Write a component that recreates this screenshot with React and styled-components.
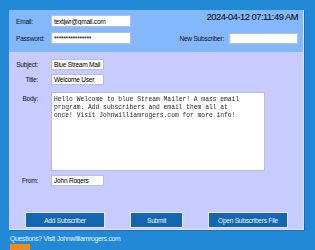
import React from 'react';
import styled, { createGlobalStyle } from 'styled-components';

const GlobalStyle = createGlobalStyle`
  html, body {
    margin: 0;
    padding: 0;
    background: #2189d6;
  }
`;

const font = `"Liberation Sans", Arial, sans-serif`;

const Window = styled.div`
  width: 315px;
  height: 250px;
  overflow: hidden;
  box-sizing: border-box;
  padding: 10px 0 0 9px;
  background: #2189d6;
  font-family: ${font};
  display: flex;
  flex-direction: column;
`;

const Panel = styled.div`
  width: 294px;
  height: 221px;
  display: flex;
  flex-direction: column;
  border-right: 1px solid #e4e6ff;
  border-bottom: 1px solid #e4e6ff;
  box-shadow: 1px 1px 0 #1a6cbc;
`;

const TopSection = styled.div`
  height: 42px;
  box-sizing: border-box;
  background: #84b8fc;
  padding: 5px 5px 0 7px;
  display: grid;
  grid-template-columns: 35px 80px 1fr auto 69px;
  grid-template-rows: 12px 12px;
  row-gap: 5px;
  align-items: center;
`;

const Label = styled.label`
  font-size: 6.6px;
  letter-spacing: -0.25px;
  color: #111;
  white-space: nowrap;
  text-align: ${p => (p.$right ? 'right' : 'left')};
  padding-right: ${p => (p.$right ? '5px' : '0')};
`;

const Field = styled.input`
  box-sizing: border-box;
  width: ${p => p.$w || 80}px;
  height: ${p => p.$h || 12}px;
  margin: 0;
  padding: 0 0 0 2px;
  border: 1px solid #b4bedd;
  background: #fff;
  font-family: ${font};
  font-size: 6.6px;
  letter-spacing: -0.25px;
  color: #000;
  outline: none;
`;

const DateText = styled.div`
  grid-column: 3 / 6;
  grid-row: 1;
  align-self: start;
  margin-top: -3px;
  text-align: right;
  font-size: 9.4px;
  letter-spacing: -0.5px;
  line-height: 10px;
  color: #000;
`;

const BodySection = styled.div`
  flex: 1;
  background: #c8cbff;
  display: flex;
  flex-direction: column;
  padding-top: 7px;
`;

const FormGrid = styled.div`
  display: grid;
  grid-template-columns: 34px auto;
  column-gap: 8px;
  row-gap: 4px;
  align-items: center;
`;

const TextArea = styled.textarea`
  box-sizing: border-box;
  width: 214px;
  height: 79px;
  margin: 3px 0 0 0;
  padding: 3px 18px 3px 2px;
  border: 1px solid #b4bedd;
  background: #fff;
  font-family: "Liberation Mono", "Courier New", monospace;
  font-size: 6.3px;
  line-height: 8px;
  color: #2a2a2a;
  resize: none;
  outline: none;
  overflow: hidden;
  will-change: transform;
`;

const TopLabel = styled(Label)`
  align-self: start;
  margin-top: 6px;
`;

const ButtonRow = styled.div`
  display: flex;
  gap: 25px;
  margin: 26px 0 0 16px;
`;

const Button = styled.button`
  width: ${p => p.$w}px;
  height: 16px;
  box-sizing: border-box;
  margin: 0;
  padding: 0;
  border: 1px solid #e6e8ff;
  background: #1465b2;
  color: #eef4ff;
  font-family: ${font};
  font-size: 6.6px;
  letter-spacing: -0.25px;
  cursor: pointer;
`;

const Footer = styled.div`
  margin: 5px 0 0 1px;
  font-size: 6.8px;
  letter-spacing: -0.25px;
  line-height: 8px;
  color: #eaf4ff;
`;

const Badge = styled.div`
  width: 20px;
  height: 6px;
  margin: 1px 0 0 1px;
  background: #f08a1c;
`;

const bodyText =
  'Hello Welcome to blue Stream Mailer! A mass email program. Add subscribers and email them all at once! Visit Johnwilliamrogers.com for more info!';

export default function App() {
  return (
    <>
      <GlobalStyle />
      <Window>
        <Panel>
          <TopSection>
            <Label>Email:</Label>
            <Field defaultValue="textjwr@gmail.com" readOnly />
            <DateText>2024-04-12 07:11:49 AM</DateText>
            <Label>Password:</Label>
            <Field defaultValue="****************" readOnly />
            <span />
            <Label $right>New Subscriber:</Label>
            <Field $w={69} $h={11} readOnly />
          </TopSection>
          <BodySection>
            <FormGrid>
              <Label $right>Subject:</Label>
              <Field $w={53} $h={11} defaultValue="Blue Stream Mail" readOnly />
              <Label $right>Title:</Label>
              <Field $w={53} $h={11} defaultValue="Welcome User" readOnly />
              <TopLabel $right>Body:</TopLabel>
              <TextArea defaultValue={bodyText} readOnly />
              <Label $right>From:</Label>
              <Field $w={53} $h={11} defaultValue="John Rogers" readOnly />
            </FormGrid>
            <ButtonRow>
              <Button $w={80}>Add Subscriber</Button>
              <Button $w={53}>Submit</Button>
              <Button $w={80}>Open Subscribers File</Button>
            </ButtonRow>
          </BodySection>
        </Panel>
        <Footer>Questions? Visit Johnwilliamrogers.com</Footer>
        <Badge />
      </Window>
    </>
  );
}
